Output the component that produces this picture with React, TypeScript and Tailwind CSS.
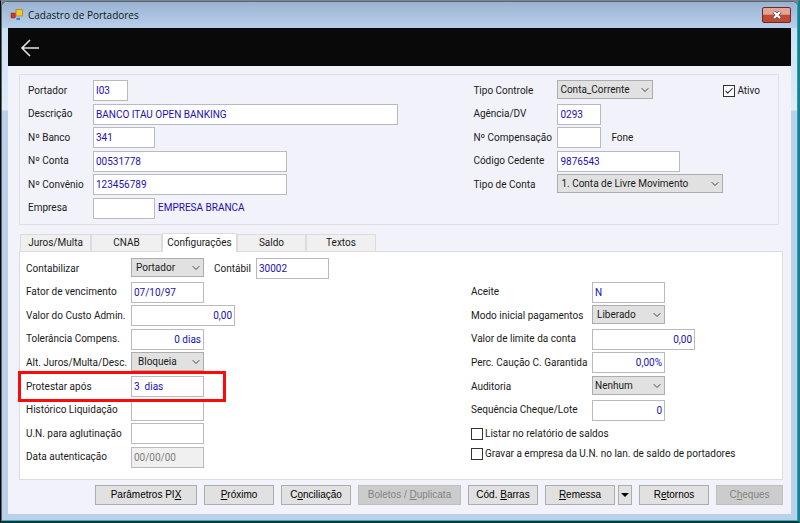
import { useId, useState } from "react";
import type { ReactNode } from "react";
import clsx from "clsx";
import { Check, ChevronDown } from "lucide-react";

type FieldProps = {
  label: string;
  labelWidth: string;
  children: (id: string) => ReactNode;
  extra?: ReactNode;
  className?: string;
};

function Field({ label, labelWidth, children, extra, className }: FieldProps) {
  const id = useId();
  return (
    <div className={clsx("flex items-center", className)}>
      <label htmlFor={id} className={clsx("shrink-0 whitespace-nowrap", labelWidth)}>
        {label}
      </label>
      {children(id)}
      {extra}
    </div>
  );
}

type TextBoxProps = {
  id?: string;
  value?: string;
  width: string;
  right?: boolean;
  disabled?: boolean;
};

function TextBox({ id, value = "", width, right, disabled }: TextBoxProps) {
  return (
    <input
      id={id}
      type="text"
      defaultValue={value}
      disabled={disabled}
      className={clsx(
        "h-[21px] shrink-0 border border-[#b9b9c2] px-0.5 outline-none",
        disabled ? "bg-[#f0f0f0] text-[#7d7d7d]" : "bg-white text-[#1c10b4]",
        right && "text-right",
        width
      )}
    />
  );
}

type SelectBoxProps = { id?: string; options: string[]; width: string; pad?: string };

function SelectBox({ id, options, width, pad = "pl-1" }: SelectBoxProps) {
  return (
    <div className={clsx("relative -mt-0.5 shrink-0", width)}>
      <select
        id={id}
        className={clsx(
          "block h-[19px] w-full appearance-none border border-[#adadad] bg-[#e1e1e1] pr-4 outline-none",
          pad
        )}
      >
        {options.map((option) => (
          <option key={option}>{option}</option>
        ))}
      </select>
      <ChevronDown
        className="pointer-events-none absolute top-1 right-0.5 size-3 text-[#444]"
        strokeWidth={2}
      />
    </div>
  );
}

type CheckBoxProps = { label: string; checked?: boolean; className?: string };

function CheckBox({ label, checked = false, className }: CheckBoxProps) {
  const [on, setOn] = useState(checked);
  return (
    <label className={clsx("flex items-center gap-0.5 whitespace-nowrap", className)}>
      <span className="relative block size-3">
        <input
          type="checkbox"
          checked={on}
          onChange={(e) => setOn(e.target.checked)}
          className="block size-3 appearance-none border border-[#333] bg-white"
        />
        {on && (
          <Check
            className="pointer-events-none absolute inset-0 size-3 p-px text-[#222]"
            strokeWidth={2.5}
          />
        )}
      </span>
      {label}
    </label>
  );
}

type ActionProps = { before?: string; hot: string; after?: string; width: string; disabled?: boolean };

// "hot" is the underlined access key
function Action({ before, hot, after, width, disabled }: ActionProps) {
  return (
    <button
      type="button"
      disabled={disabled}
      className={clsx(
        "h-5 border whitespace-nowrap",
        disabled
          ? "border-[#bfbfbf] bg-[#cccccc] text-[#838383]"
          : "border-[#adadad] bg-[#e1e1e1] text-black",
        width
      )}
    >
      {before}
      <u>{hot}</u>
      {after}
    </button>
  );
}

const tabs = [
  { name: "Juros/Multa", width: "w-[71px]" },
  { name: "CNAB", width: "w-[71px]" },
  { name: "Configurações", width: "w-[75px]" },
  { name: "Saldo", width: "w-[69px]" },
  { name: "Textos", width: "w-[70px]" },
];

export default function App() {
  const [tab, setTab] = useState("Configurações");

  return (
    <div className="flex h-screen flex-col border-t border-r-2 border-b-2 border-l border-t-[#7b8590] border-r-[#17808f] border-b-[#12353c] border-l-[#0a0a0a] bg-[#7b8590] font-[Roboto,sans-serif] text-[10px] leading-[14px] text-[#1a1a1a]">
      <div className="flex min-h-0 flex-1 flex-col rounded-t-md border border-t-[#5b6672] border-r-[#2f9fb0] border-b-[#36b4c6] border-l-[#5b6672] bg-linear-to-b from-[#c6dcf2] via-[#dfecf9] via-[108px] to-[#b9d1ea] to-[109px] px-1.5 pb-1.5">
        <header className="-mx-1.5 flex h-[26px] shrink-0 items-center rounded-t-md bg-linear-to-b from-[#98b3d1] to-[#b9d0ea] pr-1.5 pl-2">
          <svg viewBox="0 0 13 12" className="h-3 w-[13px]">
            <rect x="1" y="4" width="4.5" height="5" fill="#c8392b" stroke="#8b2a22" strokeWidth="0.5" />
            <rect x="6" y="0.5" width="6.5" height="6.5" fill="#f6c62c" stroke="#a97b10" strokeWidth="0.7" />
            <rect x="6" y="8.2" width="4.5" height="3.3" fill="#3f7fe0" stroke="#dbe8f8" strokeWidth="0.5" />
          </svg>
          <h1 className="ml-[5px] flex-1 font-['Open_Sans',sans-serif] text-[10px] text-[#101820]">
            Cadastro de Portadores
          </h1>
          <button
            type="button"
            aria-label="Fechar"
            className="flex h-4 w-[29px] items-center justify-center rounded-xs border border-[#6b2a2a] bg-linear-to-b from-[#e3a598] from-45% to-[#c04a32] to-50%"
          >
            <svg viewBox="0 0 10 8" className="h-2 w-2.5">
              <path d="M1.8 0.8l6.4 6.4M8.2 0.8L1.8 7.2" stroke="#5a4a50" strokeWidth="3.6" />
              <path d="M2 1l6 6M8 1L2 7" stroke="#fff" strokeWidth="2.2" />
            </svg>
          </button>
        </header>

        <main className="flex min-h-0 flex-1 flex-col bg-[#f2f3fa]">
          <div className="flex h-[38px] shrink-0 items-center bg-[#090909] pt-0.5 pl-3">
            <button type="button" aria-label="Voltar" className="text-[#e4e4e4]">
              <svg viewBox="0 0 20 18" className="h-[18px] w-5" fill="none" stroke="currentColor" strokeWidth="1.6">
                <path d="M19 9H2M10 1L2 9l8 8" />
              </svg>
            </button>
          </div>

          <form className="flex min-h-0 flex-1 flex-col pt-2 pr-2 pb-[9px] pl-[11px]">
            <section className="mr-1 grid h-[151px] shrink-0 grid-cols-[446fr_305fr] border border-[#dfe0e4] py-1 pl-2">
              <div className="grid grid-rows-6">
                <Field label="Portador" labelWidth="w-[65px]">
                  {(id) => <TextBox id={id} value="I03" width="w-[35px]" />}
                </Field>
                <Field label="Descrição" labelWidth="w-[65px]">
                  {(id) => <TextBox id={id} value="BANCO ITAU OPEN BANKING" width="w-[305px]" />}
                </Field>
                <Field label="Nº Banco" labelWidth="w-[65px]">
                  {(id) => <TextBox id={id} value="341" width="w-[62px]" />}
                </Field>
                <Field label="Nº Conta" labelWidth="w-[65px]">
                  {(id) => <TextBox id={id} value="00531778" width="w-[194px]" />}
                </Field>
                <Field label="Nº Convênio" labelWidth="w-[65px]">
                  {(id) => <TextBox id={id} value="123456789" width="w-[194px]" />}
                </Field>
                <Field
                  label="Empresa"
                  labelWidth="w-[65px]"
                  extra={<span className="ml-[3px] text-[#1c10b4]">EMPRESA BRANCA</span>}
                >
                  {(id) => <TextBox id={id} width="w-[62px]" />}
                </Field>
              </div>

              <div className="grid grid-rows-6">
                <Field
                  label="Tipo Controle"
                  labelWidth="w-[84px]"
                  extra={
                    <div className="mr-[18px] ml-auto">
                      <CheckBox label="Ativo" checked />
                    </div>
                  }
                >
                  {(id) => <SelectBox id={id} options={["Conta_Corrente"]} width="w-24" pad="pl-0.5" />}
                </Field>
                <Field label="Agência/DV" labelWidth="w-[84px]">
                  {(id) => <TextBox id={id} value="0293" width="w-11" />}
                </Field>
                <Field
                  label="Nº Compensação"
                  labelWidth="w-[84px]"
                  extra={<span className="ml-2.5">Fone</span>}
                >
                  {(id) => <TextBox id={id} width="w-11" />}
                </Field>
                <Field label="Código Cedente" labelWidth="w-[84px]">
                  {(id) => <TextBox id={id} value="9876543" width="w-[123px]" />}
                </Field>
                <Field label="Tipo de Conta" labelWidth="w-[84px]">
                  {(id) => (
                    <SelectBox id={id} options={["1. Conta de Livre Movimento"]} width="w-[166px]" pad="pl-[3px]" />
                  )}
                </Field>
              </div>
            </section>

            <div role="tablist" className="mt-2 flex shrink-0 items-end pl-px">
              {tabs.map((t) => (
                <button
                  key={t.name}
                  type="button"
                  role="tab"
                  aria-selected={tab === t.name}
                  onClick={() => setTab(t.name)}
                  className={clsx(
                    "border border-b-0 border-[#dcdcdc]",
                    tab === t.name ? "relative z-10 -mb-px h-[19px] bg-white" : "h-[17px] bg-[#f0f0f0]",
                    t.width
                  )}
                >
                  {t.name}
                </button>
              ))}
            </div>

            <section
              role="tabpanel"
              className="grid min-h-0 flex-1 grid-cols-[445fr_311fr] border border-[#dcdcdc] bg-white pt-[5px] pb-2.5 pl-1.5"
            >
              <div className="grid grid-rows-9">
                <Field
                  label="Contabilizar"
                  labelWidth="w-[105px]"
                  extra={
                    <label className="ml-2.5 flex items-center whitespace-nowrap">
                      <span className="w-[42px]">Contábil</span>
                      <TextBox value="30002" width="w-[73px]" />
                    </label>
                  }
                >
                  {(id) => <SelectBox id={id} options={["Portador"]} width="w-[73px]" />}
                </Field>
                <Field label="Fator de vencimento" labelWidth="w-[105px]">
                  {(id) => <TextBox id={id} value="07/10/97" width="w-[73px]" />}
                </Field>
                <Field label="Valor do Custo Admin." labelWidth="w-[105px]">
                  {(id) => <TextBox id={id} value="0,00" width="w-[104px]" right />}
                </Field>
                <Field label="Tolerância Compens." labelWidth="w-[105px]">
                  {(id) => <TextBox id={id} value="0 dias" width="w-[73px]" right />}
                </Field>
                <Field label="Alt. Juros/Multa/Desc." labelWidth="w-[105px]">
                  {(id) => <SelectBox id={id} options={["Bloqueia"]} width="w-[73px]" pad="pl-1.5" />}
                </Field>
                <div className="relative grid">
                  <Field label="Protestar após" labelWidth="w-[105px]">
                    {(id) => <TextBox id={id} value="3  dias" width="w-[73px]" />}
                  </Field>
                  <div className="pointer-events-none absolute -inset-y-1 -left-2 w-52 border-3 border-[#fb0a0a]" />
                </div>
                <Field label="Histórico Liquidação" labelWidth="w-[105px]">
                  {(id) => <TextBox id={id} width="w-[73px]" />}
                </Field>
                <Field label="U.N. para aglutinação" labelWidth="w-[105px]">
                  {(id) => <TextBox id={id} width="w-[73px]" />}
                </Field>
                <Field label="Data autenticação" labelWidth="w-[105px]">
                  {(id) => <TextBox id={id} value="00/00/00" width="w-[73px]" disabled />}
                </Field>
              </div>

              <div className="grid grid-flow-col grid-rows-9">
                <Field label="Aceite" labelWidth="w-[121px]" className="row-start-2">
                  {(id) => <TextBox id={id} value="N" width="w-[73px]" />}
                </Field>
                <Field label="Modo inicial pagamentos" labelWidth="w-[121px]">
                  {(id) => <SelectBox id={id} options={["Liberado"]} width="w-[73px]" />}
                </Field>
                <Field label="Valor de limite da conta" labelWidth="w-[121px]">
                  {(id) => <TextBox id={id} value="0,00" width="w-[103px]" right />}
                </Field>
                <Field label="Perc. Caução C. Garantida" labelWidth="w-[121px]">
                  {(id) => <TextBox id={id} value="0,00%" width="w-[73px]" right />}
                </Field>
                <Field label="Auditoria" labelWidth="w-[121px]">
                  {(id) => <SelectBox id={id} options={["Nenhum"]} width="w-[73px]" pad="pl-0.5" />}
                </Field>
                <Field label="Sequência Cheque/Lote" labelWidth="w-[121px]">
                  {(id) => <TextBox id={id} value="0" width="w-[73px]" right />}
                </Field>
                <CheckBox label="Listar no relatório de saldos" />
                <CheckBox
                  label="Gravar a empresa da U.N. no lan. de saldo de portadores"
                  className="self-start pt-0.5"
                />
              </div>
            </section>

            <div className="mt-[5px] flex shrink-0 justify-end gap-[7px] font-['Liberation_Sans',sans-serif] text-[10px]">
              <Action before="Parâmetros PI" hot="X" width="w-[102px]" />
              <Action hot="P" after="róximo" width="w-[70px]" />
              <Action before="C" hot="o" after="nciliação" width="w-[70px]" />
              <Action before="Boletos / " hot="D" after="uplicata" width="w-[103px]" disabled />
              <Action before="Cód. " hot="B" after="arras" width="w-[70px]" />
              <div className="flex gap-[3px]">
                <Action hot="R" after="emessa" width="w-[70px]" />
                <button
                  type="button"
                  aria-label="Mais opções de remessa"
                  className="flex h-5 w-3.5 items-center justify-center border border-[#adadad] bg-[#e1e1e1]"
                >
                  <svg viewBox="0 0 8 4" className="h-1 w-2">
                    <path d="M0 0h8L4 4z" fill="#000" />
                  </svg>
                </button>
              </div>
              <Action before="R" hot="e" after="tornos" width="w-[70px]" />
              <Action before="C" hot="h" after="eques" width="w-[67px]" disabled />
            </div>
          </form>
        </main>
      </div>
    </div>
  );
}
